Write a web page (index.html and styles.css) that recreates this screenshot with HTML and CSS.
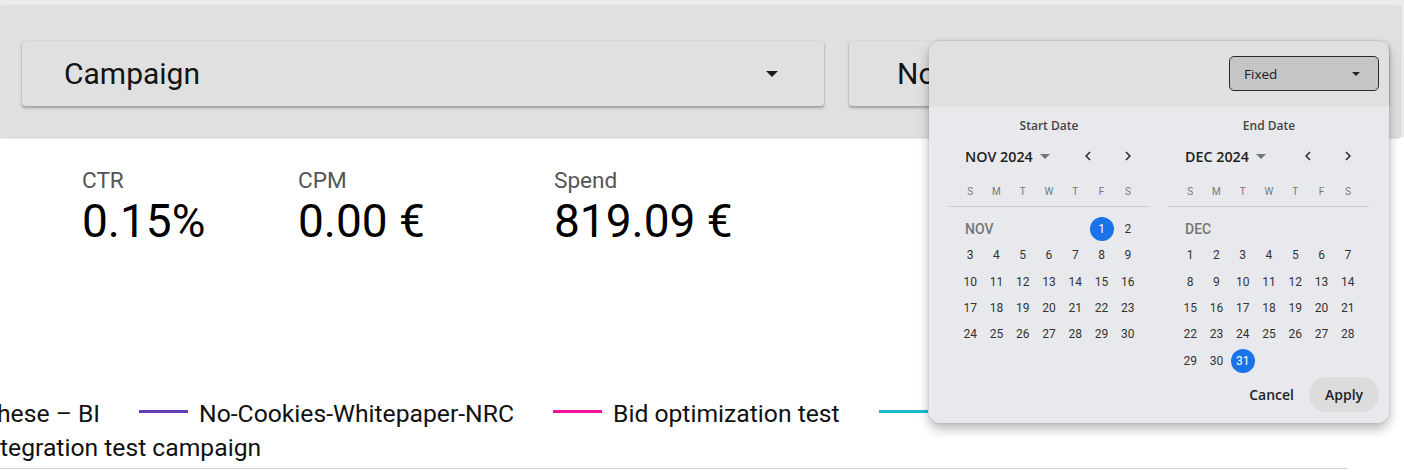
FILE: index.html
```html
<!DOCTYPE html>
<html lang="en">
<head>
<meta charset="utf-8">
<title>Dashboard</title>
<link rel="stylesheet" href="styles.css">
</head>
<body>
<div class="page">
  <div class="top">
    <div class="toolbar">
      <div class="card card-campaign">
        <span class="card-text">Campaign</span>
        <span class="tri-down"></span>
      </div>
      <div class="card card-other">
        <span class="card-text">No</span>
      </div>
    </div>
  </div>

  <div class="kpis">
    <div class="kpi kpi-ctr">
      <div class="kpi-label">CTR</div>
      <div class="kpi-value">0.15%</div>
    </div>
    <div class="kpi kpi-cpm">
      <div class="kpi-label">CPM</div>
      <div class="kpi-value">0.00 €</div>
    </div>
    <div class="kpi">
      <div class="kpi-label">Spend</div>
      <div class="kpi-value">819.09 €</div>
    </div>
  </div>

  <div class="legend">
    <div class="legend-row legend-first">
      <span class="legend-item"><span class="legend-text">hese – BI</span></span>
      <span class="legend-item"><span class="swatch sw-purple"></span><span class="legend-text">No-Cookies-Whitepaper-NRC</span></span>
      <span class="legend-item"><span class="swatch sw-pink"></span><span class="legend-text">Bid optimization test</span></span>
      <span class="legend-item"><span class="swatch sw-cyan"></span></span>
    </div>
    <div class="legend-row">
      <span class="legend-item"><span class="legend-text">tegration test campaign</span></span>
    </div>
  </div>
  <div class="rule"></div>

  <div class="datepicker">
    <div class="dp-head">
      <div class="fixed-select">
        <span>Fixed</span>
        <span class="tri-small"></span>
      </div>
    </div>
    <div class="dp-body">
      <div class="cals">
        <div class="cal">
          <div class="cal-title">Start Date</div>
          <div class="cal-nav">
            <span class="month-name">NOV 2024</span>
            <svg class="month-drop" viewBox="0 0 24 24" width="24" height="24"><path d="M7 10l5 5 5-5z"/></svg>
            <div class="nav-btns">
              <span class="nav-btn"><svg viewBox="0 0 24 24" width="18" height="18"><path d="M15.41 7.41 14 6l-6 6 6 6 1.41-1.41L10.83 12z"/></svg></span>
              <span class="nav-btn"><svg viewBox="0 0 24 24" width="18" height="18"><path d="M10 6 8.59 7.41 13.17 12l-4.58 4.59L10 18l6-6z"/></svg></span>
            </div>
          </div>
          <div class="weekdays"><span>S</span><span>M</span><span>T</span><span>W</span><span>T</span><span>F</span><span>S</span></div>
          <div class="days">
            <span class="month-label span5">NOV</span>
            <span class="day"><span class="sel">1</span></span><span class="day">2</span>
            <span class="day">3</span><span class="day">4</span><span class="day">5</span><span class="day">6</span><span class="day">7</span><span class="day">8</span><span class="day">9</span>
            <span class="day">10</span><span class="day">11</span><span class="day">12</span><span class="day">13</span><span class="day">14</span><span class="day">15</span><span class="day">16</span>
            <span class="day">17</span><span class="day">18</span><span class="day">19</span><span class="day">20</span><span class="day">21</span><span class="day">22</span><span class="day">23</span>
            <span class="day">24</span><span class="day">25</span><span class="day">26</span><span class="day">27</span><span class="day">28</span><span class="day">29</span><span class="day">30</span>
          </div>
        </div>
        <div class="cal">
          <div class="cal-title">End Date</div>
          <div class="cal-nav">
            <span class="month-name">DEC 2024</span>
            <svg class="month-drop" viewBox="0 0 24 24" width="24" height="24"><path d="M7 10l5 5 5-5z"/></svg>
            <div class="nav-btns">
              <span class="nav-btn"><svg viewBox="0 0 24 24" width="18" height="18"><path d="M15.41 7.41 14 6l-6 6 6 6 1.41-1.41L10.83 12z"/></svg></span>
              <span class="nav-btn"><svg viewBox="0 0 24 24" width="18" height="18"><path d="M10 6 8.59 7.41 13.17 12l-4.58 4.59L10 18l6-6z"/></svg></span>
            </div>
          </div>
          <div class="weekdays"><span>S</span><span>M</span><span>T</span><span>W</span><span>T</span><span>F</span><span>S</span></div>
          <div class="days">
            <span class="month-label span7">DEC</span>
            <span class="day">1</span><span class="day">2</span><span class="day">3</span><span class="day">4</span><span class="day">5</span><span class="day">6</span><span class="day">7</span>
            <span class="day">8</span><span class="day">9</span><span class="day">10</span><span class="day">11</span><span class="day">12</span><span class="day">13</span><span class="day">14</span>
            <span class="day">15</span><span class="day">16</span><span class="day">17</span><span class="day">18</span><span class="day">19</span><span class="day">20</span><span class="day">21</span>
            <span class="day">22</span><span class="day">23</span><span class="day">24</span><span class="day">25</span><span class="day">26</span><span class="day">27</span><span class="day">28</span>
            <span class="day">29</span><span class="day">30</span><span class="day"><span class="sel">31</span></span>
          </div>
        </div>
      </div>
      <div class="actions">
        <span class="btn-cancel">Cancel</span>
        <span class="btn-apply">Apply</span>
      </div>
    </div>
  </div>
</div>
</body>
</html>
```

FILE: styles.css
```css
html, body {
  margin: 0;
  padding: 0;
  background: #ffffff;
}

body {
  font-family: Roboto, "Liberation Sans", Arial, sans-serif;
  color: #111;
}

.page {
  position: relative;
  width: 1404px;
  height: 475px;
  overflow: hidden;
  background: #ffffff;
}

/* ---------- top toolbar ---------- */
.top {
  background: #ececec;
  padding: 5px 4px 0 0;
}

.toolbar {
  position: relative;
  z-index: 1;
  box-sizing: border-box;
  height: 132px;
  background: #e0e0e0;
  box-shadow: 0 1px 2px rgba(0, 0, 0, 0.22);
  display: flex;
  align-items: flex-start;
  gap: 25px;
  padding: 36px 0 0 22px;
}

.card {
  box-sizing: border-box;
  height: 65px;
  background: #e0e0e0;
  border-radius: 3px;
  box-shadow: 0 2px 3px rgba(0, 0, 0, 0.3), 0 0 1px rgba(0, 0, 0, 0.2);
  display: flex;
  align-items: center;
}

.card-campaign {
  width: 802px;
  padding: 0 46px 0 42px;
  justify-content: space-between;
}

.card-other {
  width: 540px;
  padding-left: 48px;
}

.card-text {
  font-size: 30px;
  color: #141414;
}

.tri-down {
  width: 0;
  height: 0;
  border-left: 6px solid transparent;
  border-right: 6px solid transparent;
  border-top: 6px solid #1a1a1a;
  margin-top: 1px;
}

/* ---------- KPIs ---------- */
.kpis {
  display: flex;
  padding-left: 82px;
  margin-top: 31px;
}

.kpi-ctr { width: 216px; }
.kpi-cpm { width: 256px; }

.kpi-label {
  font-size: 22.6px;
  line-height: 26px;
  color: #555;
}

.kpi-value {
  font-size: 46px;
  line-height: 52px;
  color: #000;
  margin-top: 1px;
}

/* ---------- legend ---------- */
.legend {
  margin-top: 149px;
}

.legend-row {
  display: flex;
  align-items: center;
  height: 34px;
  white-space: nowrap;
  font-size: 24.7px;
  color: #111;
}

.legend-first {
  margin-left: -3px;
}

.legend-item {
  display: flex;
  align-items: center;
  margin-right: 39px;
}

.swatch {
  display: block;
  width: 49px;
  height: 3px;
  margin-right: 11px;
  margin-top: -3px;
}

.sw-purple { background: #673ab7; }
.sw-pink { background: #f2139a; }
.sw-cyan { background: #18bcd0; }

.rule {
  width: 1347px;
  height: 1px;
  background: #d2d2d2;
  margin-top: 4px;
}

/* ---------- date picker popup ---------- */
.datepicker {
  position: absolute;
  left: 929px;
  top: 41px;
  width: 460px;
  height: 382px;
  border-radius: 12px;
  overflow: hidden;
  z-index: 5;
  display: flex;
  flex-direction: column;
  box-shadow: 0 6px 12px rgba(0, 0, 0, 0.28), 0 0 3px rgba(0, 0, 0, 0.15);
}

.dp-head {
  box-sizing: border-box;
  height: 66px;
  background: #e0e0e0;
  display: flex;
  justify-content: flex-end;
  align-items: flex-start;
  padding: 15px 10px 0 0;
}

.fixed-select {
  box-sizing: border-box;
  width: 150px;
  height: 35px;
  border: 1px solid #2a2a2a;
  border-radius: 5px;
  background: #c5c5c5;
  display: flex;
  align-items: center;
  justify-content: space-between;
  padding: 0 18px 0 14px;
  font-family: "Open Sans", Roboto, sans-serif;
  font-size: 13.5px;
  color: #1a1a1a;
}

.tri-small {
  width: 0;
  height: 0;
  border-left: 4px solid transparent;
  border-right: 4px solid transparent;
  border-top: 4px solid #222;
}

.dp-body {
  flex: 1;
  background: #e8e9ec;
  display: flex;
  flex-direction: column;
  padding: 11px 10px 11px 20px;
}

.cals {
  flex: 1;
  display: flex;
  gap: 20px;
}

.cal {
  width: 200px;
}

.cal-title {
  text-align: center;
  font-family: "Open Sans", Roboto, sans-serif;
  font-weight: 600;
  font-size: 12px;
  line-height: 16px;
  color: #444;
}

.cal-nav {
  display: flex;
  align-items: center;
  height: 32px;
  margin-top: 6px;
  padding-left: 16px;
}

.month-name {
  font-family: "Open Sans", Roboto, sans-serif;
  font-weight: 600;
  font-size: 14.3px;
  color: #1e1e1e;
}

.month-drop {
  fill: #757575;
}

.nav-btns {
  margin-left: auto;
  display: flex;
  margin-right: 1px;
}

.nav-btn {
  width: 40px;
  height: 32px;
  display: flex;
  align-items: center;
  justify-content: center;
}

.nav-btn svg {
  fill: #2b2b2b;
}

.weekdays {
  display: grid;
  grid-template-columns: repeat(7, 1fr);
  padding: 0 8px 2px;
  margin-top: 8px;
  height: 24px;
  line-height: 24px;
  border-bottom: 1px solid #c9c9cc;
  font-size: 10px;
  color: #777;
  text-align: center;
}

.days {
  display: grid;
  grid-template-columns: repeat(7, 1fr);
  grid-auto-rows: 26.3px;
  padding: 9px 8px 0;
  font-size: 12px;
  color: #333;
}

.day {
  display: flex;
  align-items: center;
  justify-content: center;
}

.sel {
  width: 24px;
  height: 24px;
  border-radius: 50%;
  background: #1a73e8;
  color: #fff;
  display: flex;
  align-items: center;
  justify-content: center;
}

.month-label {
  display: flex;
  align-items: center;
  padding-left: 8px;
  font-size: 14px;
  font-weight: 500;
  color: #757575;
}

.span5 { grid-column: span 5; }
.span7 { grid-column: span 7; }

.actions {
  display: flex;
  justify-content: flex-end;
  align-items: center;
  height: 35px;
  font-family: "Open Sans", Roboto, sans-serif;
  font-weight: 600;
  font-size: 14px;
  color: #222;
}

.btn-cancel {
  padding: 0 15px;
}

.btn-apply {
  width: 70px;
  height: 35px;
  border-radius: 18px;
  background: #dcdcdd;
  display: flex;
  align-items: center;
  justify-content: center;
}
```
